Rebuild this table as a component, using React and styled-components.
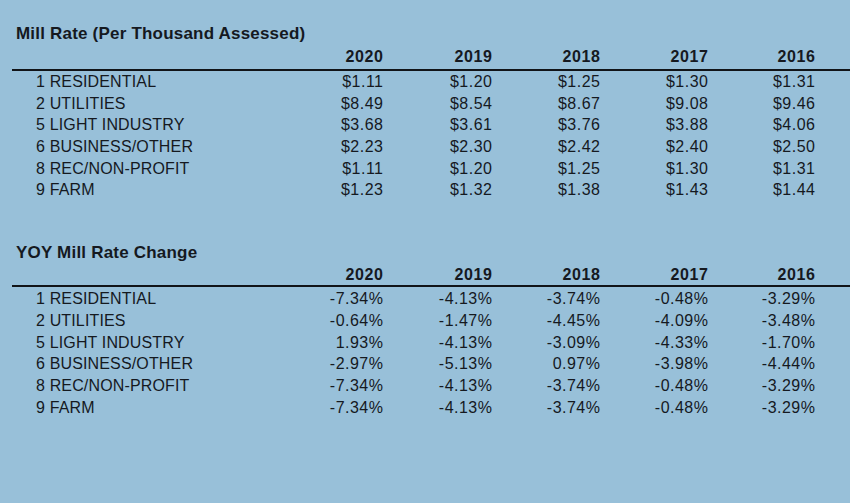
import React from "react"
import styled, { createGlobalStyle } from "styled-components"

const years = ["2020", "2019", "2018", "2017", "2016"]

const millRates = [
  ["1 RESIDENTIAL", "$1.11", "$1.20", "$1.25", "$1.30", "$1.31"],
  ["2 UTILITIES", "$8.49", "$8.54", "$8.67", "$9.08", "$9.46"],
  ["5 LIGHT INDUSTRY", "$3.68", "$3.61", "$3.76", "$3.88", "$4.06"],
  ["6 BUSINESS/OTHER", "$2.23", "$2.30", "$2.42", "$2.40", "$2.50"],
  ["8 REC/NON-PROFIT", "$1.11", "$1.20", "$1.25", "$1.30", "$1.31"],
  ["9 FARM", "$1.23", "$1.32", "$1.38", "$1.43", "$1.44"],
]

const yoyChange = [
  ["1 RESIDENTIAL", "-7.34%", "-4.13%", "-3.74%", "-0.48%", "-3.29%"],
  ["2 UTILITIES", "-0.64%", "-1.47%", "-4.45%", "-4.09%", "-3.48%"],
  ["5 LIGHT INDUSTRY", "1.93%", "-4.13%", "-3.09%", "-4.33%", "-1.70%"],
  ["6 BUSINESS/OTHER", "-2.97%", "-5.13%", "0.97%", "-3.98%", "-4.44%"],
  ["8 REC/NON-PROFIT", "-7.34%", "-4.13%", "-3.74%", "-0.48%", "-3.29%"],
  ["9 FARM", "-7.34%", "-4.13%", "-3.74%", "-0.48%", "-3.29%"],
]

const GlobalStyle = createGlobalStyle`
  html, body {
    margin: 0;
    padding: 0;
    background: #98c0d9;
  }
  body {
    font-family: "Liberation Sans", Arial, Helvetica, sans-serif;
    color: #15191f;
  }
`

const Page = styled.div`
  width: 850px;
  min-height: 503px;
  box-sizing: border-box;
  padding-top: 25px;
  background: #98c0d9;
`

const Section = styled.section`
  margin-top: ${(p) => p.$top || 0}px;
`

const Title = styled.h2`
  margin: 0 0 ${(p) => p.$gap}px 16px;
  font-size: 17px;
  line-height: 18px;
  font-weight: 700;
  letter-spacing: 0.2px;
`

const Grid = styled.div`
  display: grid;
  grid-template-columns: 288px 83px 109px 108px 108px 107px 1fr;
  margin-left: 12px;
`

const HeadRow = styled(Grid)`
  padding-bottom: ${(p) => p.$gap}px;
  border-bottom: 2px solid #111418;
`

const Year = styled.div`
  grid-column: ${(p) => p.$col};
  text-align: right;
  font-size: 16px;
  line-height: 18px;
  font-weight: 700;
  letter-spacing: 0.6px;
  margin-right: -0.6px;
`

const Body = styled.div`
  padding-top: ${(p) => p.$top || 0}px;
`

const Row = styled(Grid)`
  height: 21.7px;
  font-size: 16px;
  line-height: 21.7px;
`

const Label = styled.div`
  padding-left: 24px;
  letter-spacing: 0.15px;
  white-space: nowrap;
`

const Value = styled.div`
  text-align: right;
  letter-spacing: 0.5px;
  margin-right: -0.5px;
  white-space: nowrap;
`

const RateTable = ({ title, rows, titleGap, headGap, bodyTop, top }) => (
  <Section $top={top}>
    <Title $gap={titleGap}>{title}</Title>
    <HeadRow $gap={headGap}>
      {years.map((y, i) => (
        <Year key={y} $col={i + 2}>
          {y}
        </Year>
      ))}
    </HeadRow>
    <Body $top={bodyTop}>
      {rows.map(([label, ...values]) => (
        <Row key={label}>
          <Label>{label}</Label>
          {values.map((v, i) => (
            <Value key={i}>{v}</Value>
          ))}
        </Row>
      ))}
    </Body>
  </Section>
)

const App = () => {
  return (
    <Page>
      <GlobalStyle />
      <RateTable
        title='Mill Rate (Per Thousand Assessed)'
        rows={millRates}
        titleGap={5}
        headGap={3}
        bodyTop={0}
      />
      <RateTable
        title='YOY Mill Rate Change'
        rows={yoyChange}
        titleGap={4}
        headGap={1}
        bodyTop={1.5}
        top={42.5}
      />
    </Page>
  )
}

export default App
